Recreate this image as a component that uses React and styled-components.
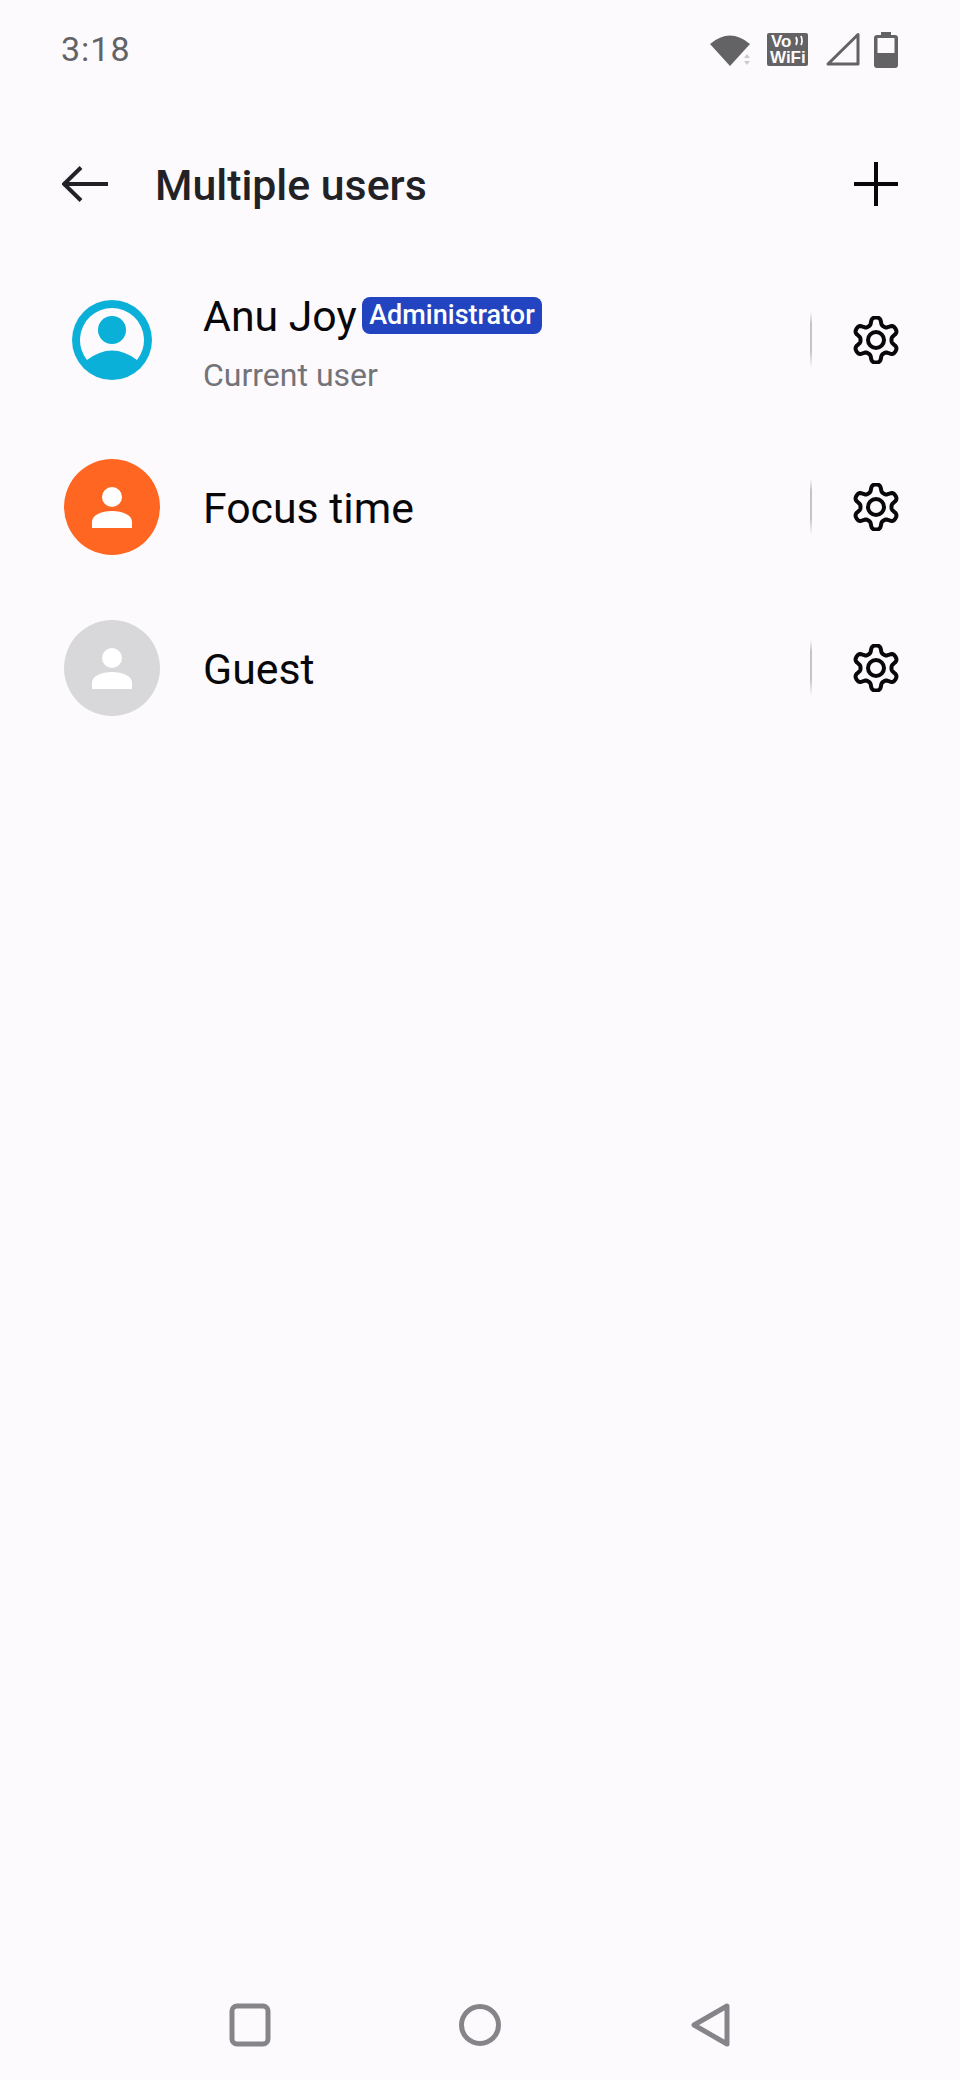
import React from "react";
import styled, { createGlobalStyle } from "styled-components";

const BG = "#fcfafd";

const Global = createGlobalStyle`
  html, body { margin: 0; padding: 0; background: ${BG}; }
  * { box-sizing: border-box; }
`;

const Page = styled.div`
  width: 960px;
  height: 2080px;
  display: flex;
  flex-direction: column;
  background: ${BG};
  font-family: Roboto, "Liberation Sans", sans-serif;
`;

const StatusBar = styled.div`
  height: 98px;
  padding: 0 62px 0 61px;
  display: flex;
  align-items: center;
  justify-content: space-between;
`;

const Time = styled.span`
  font-size: 34px;
  color: #636366;
  letter-spacing: 1px;
`;

const StatusIcons = styled.div`
  display: flex;
  align-items: center;
  gap: 17px;
`;

const BatteryIcon = styled.svg`
  margin-left: -3px;
`;

const VoWifiText = styled.text`
  font-family: "Liberation Sans", Arial, sans-serif;
  font-weight: 700;
  fill: ${BG};
`;

const Header = styled.header`
  height: 140px;
  margin-top: 16px;
  padding: 0 62px;
  display: flex;
  align-items: center;
`;

const Title = styled.h1`
  margin: 2px 0 0 47px;
  flex: 1;
  font-size: 42.800px;
  font-weight: 500;
  color: #222226;
`;

const List = styled.div`
  display: flex;
  flex-direction: column;
`;

const Row = styled.div`
  height: ${(p) => p.$height}px;
  padding: 0 60px 0 64px;
  display: flex;
  align-items: center;
`;

const AvatarSlot = styled.div`
  width: 96px;
  height: 96px;
  flex: none;
  display: flex;
  align-items: center;
  justify-content: center;
`;

const Avatar = styled.div`
  width: 96px;
  height: 96px;
  border-radius: 50%;
  background: ${(p) => p.$color};
`;

const RowText = styled.div`
  flex: 1;
  margin-left: 43px;
  padding-top: ${(p) => (p.$stacked ? 5 : 2)}px;
  display: flex;
  flex-direction: column;
  gap: 15px;
`;

const NameLine = styled.div`
  display: flex;
  align-items: center;
  gap: 5px;
`;

const Name = styled.span`
  font-size: 42.800px;
  line-height: 50px;
  color: #08080a;
`;

const Badge = styled.span`
  height: 37px;
  margin-top: -2px;
  padding: 0 7.500px;
  border-radius: 8px;
  background: #2244c0;
  color: #fff;
  font-size: 27px;
  font-weight: 500;
  line-height: 37px;
`;

const Subtitle = styled.span`
  font-size: 32px;
  line-height: 38px;
  color: #737378;
`;

const Divider = styled.div`
  width: 2px;
  height: 56px;
  margin-right: 40px;
  background: linear-gradient(to bottom, ${BG}, #c4c4c8 20%, #c4c4c8 70%, ${BG});
`;

const GearSlot = styled.div`
  width: 48px;
  height: 48px;
  display: flex;
  align-items: center;
  justify-content: center;
  color: #08080a;
`;

const NavBar = styled.nav`
  margin-top: auto;
  height: 110px;
  display: flex;
  align-items: center;
  justify-content: center;
  gap: 186px;
`;

const PersonGlyph = () => (
  <svg width="96" height="96" viewBox="0 0 96 96">
    <circle cx="48" cy="38" r="10" fill="#fff" />
    <path d="M28 69v-6c0-7 9-11 20-11s20 4 20 11v6z" fill="#fff" />
  </svg>
);

const CurrentAvatar = () => (
  <svg width="80" height="80" viewBox="0 0 80 80">
    <circle cx="40" cy="40" r="40" fill="#0ab0d8" />
    <path d="M15 60A32 32 0 1 1 65 60Q40 41 15 60z" fill={BG} />
    <circle cx="40" cy="30" r="14" fill="#0ab0d8" />
  </svg>
);

// Six rounded lobes around a 24,24 centre, one of them pointing straight up.
const gearPath = (() => {
  const points = [];
  for (let i = 0; i < 180; i += 1) {
    const a = (i / 180) * Math.PI * 2;
    const k = Math.tanh(-1.7 * Math.cos(6 * a)) / Math.tanh(1.7);
    const r = 19 + 3.500 * k;
    points.push(`${(24 + r * Math.cos(a)).toFixed(2)} ${(24 + r * Math.sin(a)).toFixed(2)}`);
  }
  return `M${points.join("L")}z`;
})();

const Gear = () => (
  <svg width="48" height="48" viewBox="0 0 48 48" fill="none" stroke="currentColor" strokeWidth="4">
    <path d={gearPath} strokeLinejoin="round" />
    <circle cx="24" cy="24" r="8" />
  </svg>
);

const users = [
  { name: "Focus time", color: "#ff6622", height: 162 },
  { name: "Guest", color: "#d8d8da", height: 160 },
];

export default function App() {
  return (
    <Page>
      <Global />
      <StatusBar>
        <Time>3:18</Time>
        <StatusIcons>
          <svg width="40" height="36" viewBox="0 0 40 36">
            <path d="M0 13Q20 -4 40 13L20 35z" fill="#636366" />
            <path d="M37 23l3 4h-6zM34 30h6l-3 4z" fill="#c9c9cc" />
          </svg>
          <svg width="41" height="33" viewBox="0 0 41 33">
            <rect width="41" height="33" rx="2" fill="#636366" />
            <VoWifiText x="4" y="14" fontSize="17">Vo</VoWifiText>
            <path d="M29 4q2 4 0 8M34 3q2 5 0 9" stroke={BG} strokeWidth="1.800" fill="none" />
            <VoWifiText x="3" y="30" fontSize="17">WiFi</VoWifiText>
          </svg>
          <svg width="35" height="36" viewBox="0 0 35 36">
            <path d="M33 3.500V33H3z" fill="none" stroke="#636366" strokeWidth="3" strokeLinejoin="round" />
          </svg>
          <BatteryIcon width="24" height="37" viewBox="0 0 24 37">
            <path d="M7 1h10v3h4q3 0 3 3v27q0 3-3 3H3q-3 0-3-3V7q0-3 3-3h4z" fill="#636366" />
            <rect x="3.500" y="7" width="17" height="15" fill={BG} />
          </BatteryIcon>
        </StatusIcons>
      </StatusBar>

      <Header>
        <svg width="46" height="36" viewBox="0 0 46 36">
          <path d="M46 18H2M19 1.500 2 18l17 16.500" fill="none" stroke="#222226" strokeWidth="4" />
        </svg>
        <Title>Multiple users</Title>
        <svg width="44" height="44" viewBox="0 0 44 44">
          <path d="M22 0v44M0 22h44" stroke="#08080a" strokeWidth="4" />
        </svg>
      </Header>

      <List>
        <Row $height={172}>
          <AvatarSlot>
            <CurrentAvatar />
          </AvatarSlot>
          <RowText $stacked>
            <NameLine>
              <Name>Anu Joy</Name>
              <Badge>Administrator</Badge>
            </NameLine>
            <Subtitle>Current user</Subtitle>
          </RowText>
          <Divider />
          <GearSlot>
            <Gear />
          </GearSlot>
        </Row>
        {users.map((u) => (
          <Row key={u.name} $height={u.height}>
            <AvatarSlot>
              <Avatar $color={u.color}>
                <PersonGlyph />
              </Avatar>
            </AvatarSlot>
            <RowText>
              <Name>{u.name}</Name>
            </RowText>
            <Divider />
            <GearSlot>
              <Gear />
            </GearSlot>
          </Row>
        ))}
      </List>

      <NavBar>
        <svg width="44" height="44" viewBox="0 0 44 44">
          <rect x="4" y="3" width="36" height="38" rx="5" fill="none" stroke="#858589" strokeWidth="5" />
        </svg>
        <svg width="44" height="44" viewBox="0 0 44 44">
          <circle cx="22" cy="22" r="18.500" fill="none" stroke="#858589" strokeWidth="5" />
        </svg>
        <svg width="44" height="44" viewBox="0 0 44 44">
          <path d="M6 22 39 3v38z" fill="none" stroke="#858589" strokeWidth="5" strokeLinejoin="round" />
        </svg>
      </NavBar>
    </Page>
  );
}
